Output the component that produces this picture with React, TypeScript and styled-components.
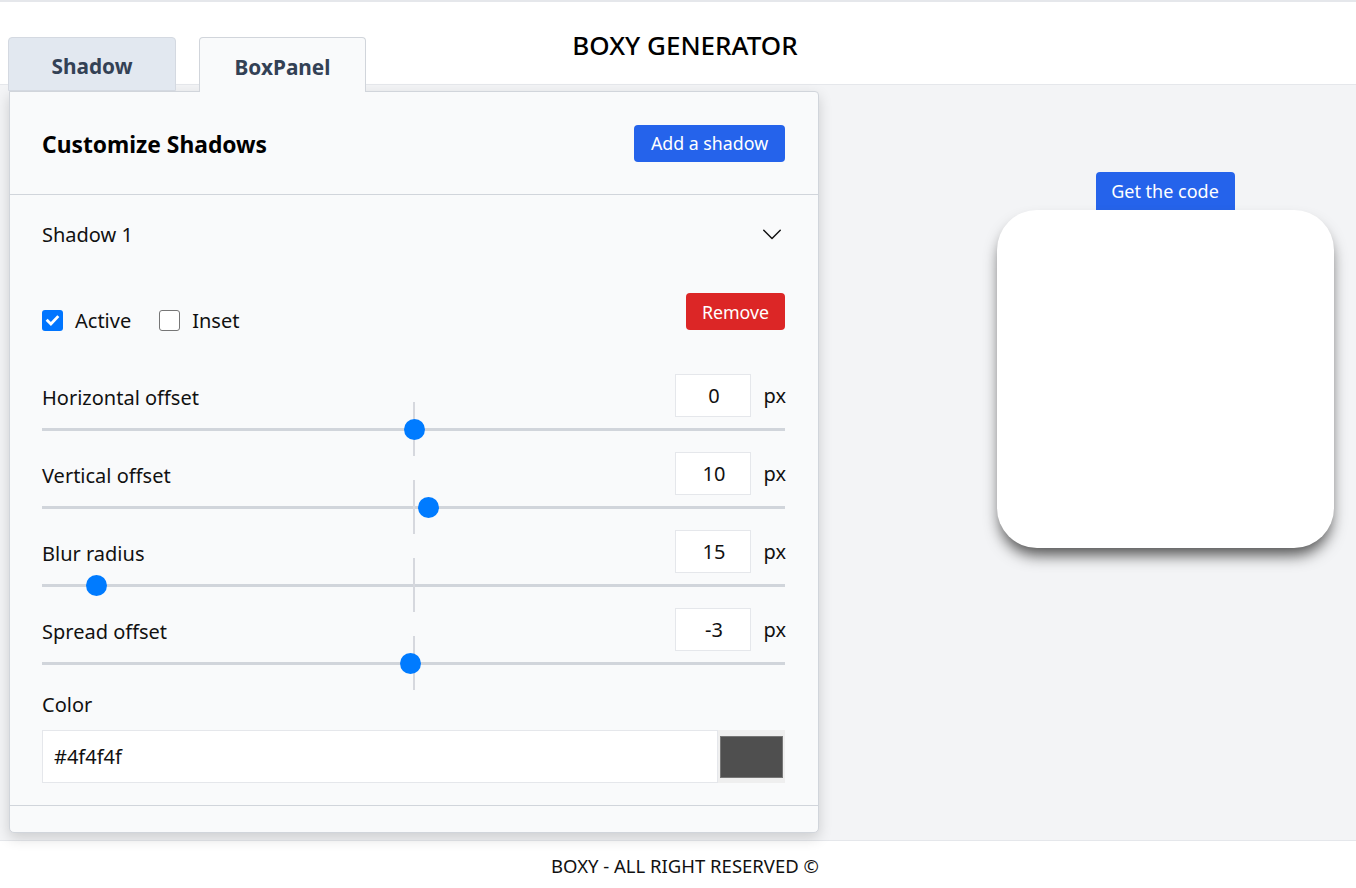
import React from "react";
import styled, { createGlobalStyle } from "styled-components";

const GlobalStyle = createGlobalStyle`
  html, body { margin: 0; padding: 0; }
  body {
    font-family: "Noto Sans", "Open Sans", sans-serif;
    color: #111;
    background: #fff;
  }
  * { box-sizing: border-box; }
`;

const Page = styled.div`
  border-top: 2px solid #e5e7eb;
  display: flex;
  flex-direction: column;
  min-height: 886px;
`;

const Header = styled.header`
  height: 83px;
  border-bottom: 1px solid #e5e7eb;
  display: flex;
  align-items: center;
  justify-content: center;
  padding-left: 14px;
  padding-top: 3px;
`;

const Title = styled.h1`
  margin: 0;
  font-size: 26px;
  font-weight: 500;
  color: #000;
`;

const Main = styled.main`
  background: #f3f4f6;
  height: 755px;
  display: grid;
  grid-template-columns: 975px 1fr;
`;

const LeftCol = styled.div`
  padding-left: 8px;
  margin-top: -48px;
  display: flex;
  flex-direction: column;
`;

const TabRow = styled.div`
  display: flex;
  gap: 23px;
  height: 54px;
  position: relative;
  z-index: 2;
`;

const Tab = styled.div<{ $active?: boolean }>`
  width: ${(p) => (p.$active ? 167 : 168)}px;
  height: ${(p) => (p.$active ? 55 : 54)}px;
  border: 1px solid ${(p) => (p.$active ? "#d1d5db" : "#d4d9e1")};
  border-bottom: ${(p) => (p.$active ? "none" : "1px solid #d4d9e1")};
  border-radius: 4px 4px 0 0;
  background: ${(p) => (p.$active ? "#f9fafb" : "#e2e8f0")};
  display: flex;
  align-items: center;
  justify-content: center;
  padding-top: 3px;
  font-size: 20.8px;
  font-weight: 700;
  color: #334155;
`;

const Panel = styled.section`
  width: 810px;
  margin-left: 1px;
  background: #f9fafb;
  border: 1px solid #d1d5db;
  border-radius: 0 4px 5px 5px;
  box-shadow: 0 5px 14px rgba(0, 0, 0, 0.16);
  position: relative;
  z-index: 1;
`;

const PanelHead = styled.div`
  height: 103px;
  padding: 3px 33px 0 32px;
  display: flex;
  align-items: center;
  justify-content: space-between;
  border-bottom: 1px solid #d1d5db;
`;

const PanelTitle = styled.h2`
  margin: 0;
  font-size: 22.8px;
  font-weight: 700;
  color: #000;
`;

const Button = styled.button<{ $variant?: "blue" | "red" }>`
  border: none;
  border-radius: 4px;
  background: ${(p) => (p.$variant === "red" ? "#dc2626" : "#2563eb")};
  color: #fff;
  font-family: inherit;
  font-size: 17.8px;
  padding: 0 16px;
  height: 37px;
  cursor: pointer;
`;

const RemoveButton = styled(Button)`
  width: 99px;
  padding: 0;
`;

const AddButton = styled(Button)`
  width: 151px;
  padding: 0;
  margin-top: -3px;
`;

const ShadowSection = styled.div`
  padding: 20px 33px 22px 32px;
  border-bottom: 1px solid #d1d5db;
`;

const AccordionHead = styled.div`
  display: flex;
  align-items: center;
  justify-content: space-between;
  height: 38px;
  font-size: 20px;
  color: #111;
  padding-right: 2px;
`;

const OptionsRow = styled.div`
  margin-top: 37px;
  display: flex;
  align-items: flex-end;
  justify-content: space-between;
  height: 40px;
`;

const Checks = styled.div`
  display: flex;
  align-items: center;
  gap: 28px;
  height: 30px;
  margin-bottom: -5px;
`;

const CheckLabel = styled.label`
  display: flex;
  align-items: center;
  gap: 12px;
  font-size: 20px;
  color: #111;
`;

const Box = styled.span<{ $checked?: boolean }>`
  width: 21px;
  height: 21px;
  border-radius: 3px;
  border: ${(p) => (p.$checked ? "none" : "1.5px solid #767676")};
  background: ${(p) => (p.$checked ? "#0075ff" : "#fff")};
  display: inline-flex;
  align-items: center;
  justify-content: center;
`;

const Controls = styled.div`
  margin-top: 44px;
  display: flex;
  flex-direction: column;
  gap: 10px;
`;

const SliderBlock = styled.div`
  display: flex;
  flex-direction: column;
`;

const SliderTop = styled.div`
  display: flex;
  align-items: center;
  justify-content: space-between;
  height: 42px;
`;

const Label = styled.span`
  font-size: 20px;
  color: #111;
  padding-top: 4px;
`;

const ValueGroup = styled.div`
  display: flex;
  align-items: center;
  gap: 13px;
`;

const NumberBox = styled.div`
  width: 76px;
  height: 43px;
  background: #fff;
  border: 1px solid #e5e7eb;
  display: flex;
  align-items: center;
  justify-content: center;
  padding-left: 3px;
  font-size: 20px;
  color: #111;
`;

const Unit = styled.span`
  font-size: 20px;
  color: #111;
  margin-right: -1px;
`;

const Track = styled.div`
  position: relative;
  height: 26px;
  &::before {
    content: "";
    position: absolute;
    left: 0;
    right: 0;
    top: 12px;
    height: 3px;
    background: #d1d5db;
  }
`;

const Tick = styled.span`
  position: absolute;
  left: 371px;
  top: -14px;
  width: 2px;
  height: 54px;
  background: #d6d8de;
`;

const Thumb = styled.span`
  position: absolute;
  top: 3px;
  width: 21px;
  height: 21px;
  margin-left: -10px;
  border-radius: 50%;
  background: #007bff;
`;

const ColorBlock = styled.div`
  margin-top: 11px;
  display: flex;
  flex-direction: column;
  gap: 12px;
`;

const ColorRow = styled.div`
  display: flex;
  height: 53px;
`;

const ColorText = styled.div`
  flex: 1;
  background: #fff;
  border: 1px solid #e5e7eb;
  display: flex;
  align-items: center;
  padding-left: 11px;
  font-size: 20px;
  color: #111;
`;

const Swatch = styled.div`
  width: 67px;
  background: #efefef;
  padding: 6px 2px 5px;
  display: flex;
`;

const SwatchFill = styled.div<{ $color: string }>`
  flex: 1;
  background: ${(p) => p.$color};
  border: 1px solid #767676;
`;

const PanelFoot = styled.div`
  height: 26px;
`;

const RightCol = styled.div`
  display: flex;
  flex-direction: column;
  align-items: center;
  padding-top: 87px;
  padding-right: 1px;
`;

const CodeButton = styled(Button)`
  height: 38px;
  width: 139px;
  padding: 0;
  font-size: 18px;
  border-radius: 4px 4px 0 0;
`;

const PreviewBox = styled.div`
  width: 337px;
  height: 338px;
  background: #fff;
  border-radius: 40px;
  box-shadow: 0 10px 15px -3px #4f4f4f;
`;

const Footer = styled.footer`
  border-top: 1px solid #e5e7eb;
  height: 47px;
  display: flex;
  align-items: center;
  justify-content: center;
  font-size: 18.5px;
  color: #111;
  padding-left: 14px;
  padding-top: 3px;
  background: #fff;
`;

const sliders = [
  { label: "Horizontal offset", value: "0", pos: 0.5 },
  { label: "Vertical offset", value: "10", pos: 0.5206 },
  { label: "Blur radius", value: "15", pos: 0.0609 },
  { label: "Spread offset", value: "-3", pos: 0.4953 },
];

const TRACK_W = 743;

function Check({ checked }: { checked?: boolean }) {
  return (
    <Box $checked={checked}>
      {checked && (
        <svg width="15" height="15" viewBox="0 0 16 16" fill="none">
          <path d="M2.8 8.3 L6.3 11.8 L13.2 4.4" stroke="#fff" strokeWidth="3" strokeLinecap="square" />
        </svg>
      )}
    </Box>
  );
}

export default function App() {
  return (
    <>
      <GlobalStyle />
      <Page>
        <Header>
          <Title>BOXY GENERATOR</Title>
        </Header>
        <Main>
          <LeftCol>
            <TabRow>
              <Tab>Shadow</Tab>
              <Tab $active>BoxPanel</Tab>
            </TabRow>
            <Panel>
              <PanelHead>
                <PanelTitle>Customize Shadows</PanelTitle>
                <AddButton>Add a shadow</AddButton>
              </PanelHead>
              <ShadowSection>
                <AccordionHead>
                  <span>Shadow 1</span>
                  <svg width="22" height="22" viewBox="0 0 24 24" fill="none">
                    <path d="M3 8 L12 17 L21 8" stroke="#111" strokeWidth="1.6" strokeLinecap="round" strokeLinejoin="round" />
                  </svg>
                </AccordionHead>
                <OptionsRow>
                  <Checks>
                    <CheckLabel>
                      <Check checked />
                      Active
                    </CheckLabel>
                    <CheckLabel>
                      <Check />
                      Inset
                    </CheckLabel>
                  </Checks>
                  <RemoveButton $variant="red">Remove</RemoveButton>
                </OptionsRow>
                <Controls>
                  {sliders.map((s) => (
                    <SliderBlock key={s.label}>
                      <SliderTop>
                        <Label>{s.label}</Label>
                        <ValueGroup>
                          <NumberBox>{s.value}</NumberBox>
                          <Unit>px</Unit>
                        </ValueGroup>
                      </SliderTop>
                      <Track>
                        <Tick />
                        <Thumb style={{ left: `${10 + s.pos * (TRACK_W - 20)}px` }} />
                      </Track>
                    </SliderBlock>
                  ))}
                </Controls>
                <ColorBlock>
                  <Label>Color</Label>
                  <ColorRow>
                    <ColorText>#4f4f4f</ColorText>
                    <Swatch>
                      <SwatchFill $color="#4f4f4f" />
                    </Swatch>
                  </ColorRow>
                </ColorBlock>
              </ShadowSection>
              <PanelFoot />
            </Panel>
          </LeftCol>
          <RightCol>
            <CodeButton>Get the code</CodeButton>
            <PreviewBox />
          </RightCol>
        </Main>
        <Footer>BOXY - ALL RIGHT RESERVED ©</Footer>
      </Page>
    </>
  );
}
